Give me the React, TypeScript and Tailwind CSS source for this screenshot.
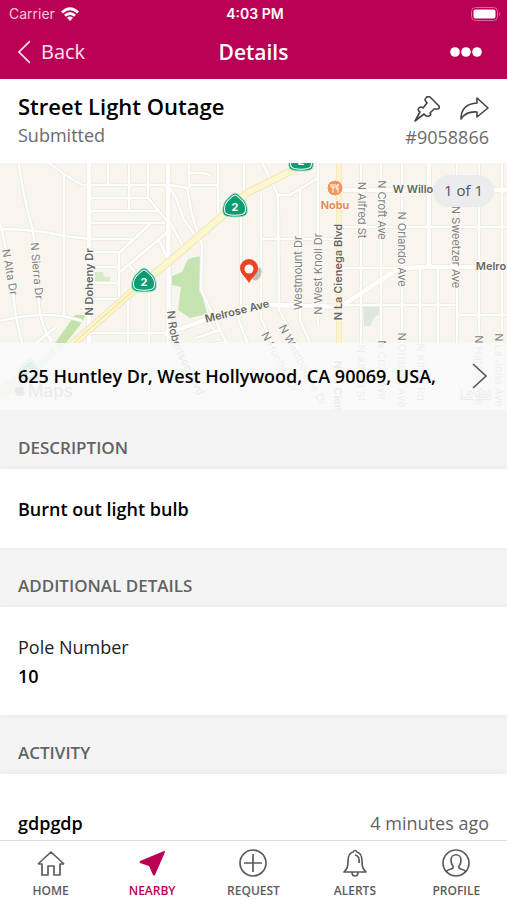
import React from 'react';
import { FaApple } from 'react-icons/fa';

type MapLabel = { text: string; x: number; y: number; angle: number; bold?: boolean };
type Tab = { label: string; icon: React.ReactNode; active?: boolean };

const minorRoads = [
  'M18 0Q25 45 33 70Q37 110 39 145Q40 165 56 190L80 240',
  'M0 62Q9 100 16 157L26 200',
  'M0 69Q35 69 65 76L89 79',
  'M45 0L64 14L82 25H170L187 28L192 55L202 85L201 130L218 165L232 195',
  'M64 14V155',
  'M0 161Q20 156 40 155Q62 154 82 161',
  'M35 184L56 167M46 174L52 180',
  'M89 38H148M89 51H158M89 63H165M89 79H132M89 107H119M89 123H119M89 139H119M89 173H170',
  'M89 92H119M119 93L150 64M120 112L170 70M119 93V148M148 38L168 62',
  'M108 0V25M129 0V51M148 0V38M128 140V250M149 124V250M128 104L136 113M159 80L167 98',
  'M170 28L176 38L184 60L200 82M170 62L184 88',
  'M189 0V28M189 13H200Q208 13 210 16M189 25H218M218 0V65M244 0V35M218 62L207 66',
  'M261 0L278 35H290L318 18M261 33V158L275 190L300 250M278 35L279 150L300 190',
  'M300 28V160L313 190M318 0V165M241 52V146M261 79H340',
  'M238 148V158L250 190M207 160L214 170M196 178L220 170M196 186L228 182',
  'M361 0V250M381 0V250M402 0V250M428 0V107M457 0V145M479 0V250M502 0V250',
  'M340 67H507M340 145H455M457 145V250M457 155H507M337 108H400M420 108V250M438 108V250M430 0V107',
];

const majorRoads = [
  'M89 0V190',
  'M168 0L169 250',
  'M165 174L205 160Q245 144 275 145L340 147L398 109L420 107H507',
  'M340 30H507',
];

const mapLabels: MapLabel[] = [
  { text: 'N Alta Dr', x: 10, y: 112, angle: 80 },
  { text: 'N Sierra Dr', x: 37, y: 111, angle: 85 },
  { text: 'N Doheny Dr', x: 89, y: 122, angle: -90, bold: true },
  { text: 'Westmount Dr', x: 298, y: 113, angle: -90 },
  { text: 'N West Knoll Dr', x: 318, y: 114, angle: -90 },
  { text: 'N La Cienega Blvd', x: 338, y: 112, angle: -90, bold: true },
  { text: 'N Alfred St', x: 362, y: 50, angle: 90 },
  { text: 'N Croft Ave', x: 382, y: 50, angle: 90 },
  { text: 'N Orlando Ave', x: 402, y: 89, angle: 90 },
  { text: 'N Sweetzer Ave', x: 456, y: 87, angle: 90 },
  { text: 'W Willo', x: 413, y: 29, angle: 0, bold: true },
  { text: 'Melro', x: 491, y: 106, angle: 0, bold: true },
  { text: 'Melrose Ave', x: 237, y: 151, angle: -14, bold: true },
  { text: 'N Huntley Dr', x: 280, y: 202, angle: 62 },
  { text: 'N Westbourne Dr', x: 303, y: 205, angle: 62 },
  { text: 'N Alfred St', x: 361, y: 213, angle: 90 },
  { text: 'N Croft Ave', x: 382, y: 210, angle: 90 },
  { text: 'N Orlando Ave', x: 402, y: 210, angle: 90 },
  { text: 'N Kings Rd', x: 421, y: 212, angle: 90 },
  { text: 'N Harper Ave', x: 479, y: 210, angle: 90 },
  { text: 'N La Jolla Ave', x: 499, y: 210, angle: 90 },
  { text: 'N La Cienega', x: 338, y: 236, angle: 90, bold: true },
];

const shields = [
  [144, 121],
  [235, 46],
  [301, 0],
  [30, 212],
];

const shieldPath = 'M0-13C3-13 5-9 8-7C12-3 13 3 12 7C11 11 5 11 0 11S-11 11-12 7C-13 3-12-3-8-7C-5-9-3-13 0-13Z';

const StreetMap = () => (
  <svg
    className="block h-[247px] w-full"
    viewBox="0 3 507 247"
    preserveAspectRatio="xMidYMid slice"
    role="img"
    aria-label="Map of West Hollywood"
  >
    <rect width="507" height="250" fill="#f8f5ee" />
    <path d="M55 183L75 155H86L80 165L66 183Z" fill="#c3e1a9" />
    <path d="M40 200L55 183H68L20 230L0 240V225Z" fill="#c3e1a9" />
    <path d="M95 112H103L104 117H110V123H95Z" fill="#d8ebc8" />
    <path d="M188 99L201 96V130L207 154L190 158L178 150L181 127L172 125V116L182 112Z" fill="#c6e4b1" />
    <path d="M363 146H380V155L375 156L370 166H364Z" fill="#dfe6dd" />

    <g fill="none" strokeLinejoin="round">
      <g stroke="#ebe7e0" strokeWidth="4">
        {minorRoads.map((d) => (
          <path key={d} d={d} />
        ))}
      </g>
      <g stroke="#ebe7e0" strokeWidth="6">
        {majorRoads.map((d) => (
          <path key={d} d={d} />
        ))}
      </g>
      <g stroke="#fffefc" strokeWidth="2.5">
        {minorRoads.map((d) => (
          <path key={d} d={d} />
        ))}
      </g>
      <g stroke="#fffefc" strokeWidth="4.5">
        {majorRoads.map((d) => (
          <path key={d} d={d} />
        ))}
      </g>
      <path d="M68 188L133 131L170 101L220 58L247 33L287 13L312 0" stroke="#efe5c0" strokeWidth="8" />
      <path d="M68 188L133 131L170 101L220 58L247 33L287 13L312 0" stroke="#fdf5cb" strokeWidth="6" />
      <path d="M70 187L88 170L133 131" stroke="#eed9a0" strokeWidth="1" />
      <path d="M339 0V250" stroke="#f6e9c0" strokeWidth="6" />
      <path d="M339 0V250" stroke="#fdf4cf" strokeWidth="4" />
    </g>

    <g fontFamily="Inter, sans-serif" fontSize="11" textAnchor="middle" stroke="#fbf9f4" strokeWidth="2" paintOrder="stroke">
      {mapLabels.map(({ text, x, y, angle, bold }) => (
        <text
          key={`${text}-${y}`}
          transform={`translate(${x} ${y}) rotate(${angle})`}
          dy="4"
          fill={bold ? '#666' : '#828282'}
          fontWeight={bold ? 600 : 400}
        >
          {text}
        </text>
      ))}
      <path id="robertson" d="M167 151Q169 178 178 196L203 246" fill="none" stroke="none" />
      <text fill="#666" fontWeight="500" textAnchor="start">
        <textPath href="#robertson">N Robertson Blvd</textPath>
      </text>
    </g>

    {shields.map(([x, y]) => (
      <g key={`${x}-${y}`} transform={`translate(${x} ${y})`}>
        <path d={shieldPath} fill="#0d9b72" stroke="#bfe3d3" strokeWidth="1" />
        <path d={shieldPath} fill="none" stroke="#fff" strokeWidth="1.2" transform="scale(0.84)" />
        <text y="5" fill="#fff" fontFamily="Inter, sans-serif" fontSize="11" fontWeight="700" textAnchor="middle">
          2
        </text>
      </g>
    ))}

    <circle cx="335" cy="28" r="8" fill="#f4935a" stroke="#fff" strokeWidth="1" />
    <path d="M331 24V27Q333 29 335 27V24M333 24V33M338 33V24Q336 25 336 29H338" fill="none" stroke="#fff" strokeWidth="1" />
    <text
      x="335"
      y="49"
      fill="#ee8148"
      stroke="#fbf9f4"
      strokeWidth="2"
      paintOrder="stroke"
      fontFamily="Inter, sans-serif"
      fontSize="11"
      fontWeight="600"
      textAnchor="middle"
    >
      Nobu
    </text>

    <ellipse cx="257" cy="114" rx="4" ry="7" fill="#8b8984" opacity="0.5" transform="rotate(25 257 114)" />
    <path d="M249 123C246 117 240 114 240 108A9 9 0 0 1 258 108C258 114 252 117 249 123Z" fill="#ea4422" />
    <circle cx="249" cy="109" r="4.5" fill="#fff" />

    <FaApple x="13" y="223" width="14" height="14" size={14} color="#555" />
    <text x="28" y="237" fill="#666" fontFamily="Inter, sans-serif" fontSize="17" fontWeight="500">
      Maps
    </text>
    <text x="460" y="238" fill="#777" fontFamily="Inter, sans-serif" fontSize="12" textDecoration="underline">
      Legal
    </text>
  </svg>
);

const tabs: Tab[] = [
  {
    label: 'HOME',
    icon: <path d="M1 15L14 3L27 15M1 15H5V26H11V17H17V26H23V15H27" />,
  },
  {
    label: 'NEARBY',
    active: true,
    icon: <path d="M26 2L2 12Q1 13 2 14L11 17L15 26Q16 27 17 26L27 3Q27 2 26 2Z" fill="currentColor" stroke="none" />,
  },
  {
    label: 'REQUEST',
    icon: (
      <>
        <circle cx="14" cy="14" r="13" />
        <path d="M14 5V23M5 14H23" />
      </>
    ),
  },
  {
    label: 'ALERTS',
    icon: (
      <>
        <path d="M12 3Q14 0 16 3C20 4 21 8 21 12C21 18 22 20 25 23H3C6 20 7 18 7 12C7 8 8 4 12 3Z" />
        <path d="M14 6Q19 7 18 14M11 23Q11 27 14 27T17 23" />
      </>
    ),
  },
  {
    label: 'PROFILE',
    icon: (
      <>
        <circle cx="14" cy="14" r="13" />
        <path d="M4 23Q5 21 9 20Q12 19 11 17Q9 15 9 11C9 4 19 4 19 11Q19 15 17 17Q16 19 19 20Q23 21 24 23" />
      </>
    ),
  },
];

const SectionTitle = ({ children }: { children: React.ReactNode }) => (
  <h2 className="h-[59px] px-[18px] pt-[26px] text-[17px] leading-6 font-semibold text-[#636363]">{children}</h2>
);

const Card = ({ children }: { children: React.ReactNode }) => (
  <div className="bg-white px-[18px] shadow-[0_0_6px_rgba(0,0,0,0.07)]">{children}</div>
);

export default function App() {
  return (
    <div className="flex h-screen flex-col overflow-hidden bg-[#f4f4f4] font-['Open_Sans',sans-serif] text-black">
      <header className="shrink-0 bg-[#ba0055] text-white">
        <div className="grid h-[27px] grid-cols-3 items-center pr-[6px] pl-[9px] font-['Inter',sans-serif] text-[14px] leading-5">
          <div className="flex items-center gap-[6px] text-[#f6c9dd]">
            Carrier
            <svg className="h-[14px] w-[18px]" viewBox="0 0 18 14" fill="#fff" aria-hidden="true">
              <path d="M0 4.5Q9-4 18 4.5L16 6.6Q9 0 2 6.6Z" />
              <path d="M3 7.7Q9 2.4 15 7.7L13 9.8Q9 6.2 5 9.8Z" />
              <path d="M6 10.8Q9 8.4 12 10.8L9 14Z" />
            </svg>
          </div>
          <span className="text-center font-semibold">4:03 PM</span>
          <svg className="h-[14px] w-[30px] justify-self-end" viewBox="0 0 30 14" aria-hidden="true">
            <rect x="0.5" y="0.5" width="26" height="13" rx="4" fill="none" stroke="#d4699b" />
            <rect x="2.5" y="2.5" width="22" height="9" rx="2" fill="#fff" />
            <path d="M28 5Q30 7 28 9Z" fill="#d4699b" />
          </svg>
        </div>
        <div className="grid h-[52px] grid-cols-3 items-center px-[18px] pb-[2px]">
          <button className="flex items-center gap-[11px] text-[20px] leading-6 text-[#fde3ee]">
            <svg className="h-6 w-3" viewBox="0 0 12 24" fill="none" stroke="currentColor" strokeWidth="1.6" aria-hidden="true">
              <path d="M12 1L1 12L12 23" />
            </svg>
            Back
          </button>
          <h1 className="text-center text-[21px] leading-6 font-semibold">Details</h1>
          <button className="justify-self-end pr-[7px]" aria-label="More options">
            <svg className="h-[10px] w-8" viewBox="0 0 32 10" fill="#fff" aria-hidden="true">
              <circle cx="5" cy="5" r="4.8" />
              <circle cx="16" cy="5" r="4.8" />
              <circle cx="27" cy="5" r="4.8" />
            </svg>
          </button>
        </div>
      </header>

      <main className="min-h-0 flex-1 overflow-hidden">
        <div className="flex h-[84px] justify-between bg-white px-[18px] pt-[13px]">
          <div>
            <h2 className="text-[22px] leading-7 font-semibold">Street Light Outage</h2>
            <p className="text-[18px] leading-[30px] text-[#6b6b6b]">Submitted</p>
          </div>
          <div className="flex flex-col items-end text-[#444]">
            <div className="flex h-[30px] items-end gap-5">
              <button aria-label="Pin request">
                <svg className="h-[26px] w-[26px]" viewBox="0 0 26 26" fill="none" stroke="currentColor" strokeWidth="1.6" strokeLinejoin="round" aria-hidden="true">
                  <path d="M12 2Q13 0 16 1L25 10Q26 12 24 13L20 13L16 17Q18 19 15 20Q12 21 10 18L1 25L6 16Q3 14 5 12Q7 10 9 12L13 7L11 4Q11 3 12 2Z" />
                </svg>
              </button>
              <button aria-label="Share request">
                <svg className="h-[26px] w-[29px]" viewBox="0 0 29 26" fill="none" stroke="currentColor" strokeWidth="1.6" strokeLinejoin="round" aria-hidden="true">
                  <path d="M17 2L28 12L17 21V16Q6 15 1 23Q1 8 17 7Z" />
                </svg>
              </button>
            </div>
            <span className="text-[18px] leading-[30px] text-[#6b6b6b]">#9058866</span>
          </div>
        </div>

        <div className="relative">
          <StreetMap />
          <span className="absolute top-3 right-[13px] rounded-2xl bg-[#ececee] px-[11px] pt-[3px] pb-[5px] text-[15px] leading-6 text-[#555]">
            1 of 1
          </span>
          <button className="absolute inset-x-0 bottom-0 flex h-[67px] items-center justify-between bg-[#fafafa]/90 pr-5 pb-[2px] pl-[18px] text-left text-[18px] leading-6 font-semibold">
            625 Huntley Dr, West Hollywood, CA 90069, USA,
            <svg className="h-[26px] w-[15px]" viewBox="0 0 15 26" fill="none" stroke="#555" strokeWidth="1.6" aria-hidden="true">
              <path d="M1 1L14 13L1 25" />
            </svg>
          </button>
        </div>

        <section>
          <SectionTitle>DESCRIPTION</SectionTitle>
          <Card>
            <p className="pt-7 pb-[26px] text-[18px] leading-[25px] font-semibold">Burnt out light bulb</p>
          </Card>
        </section>

        <section>
          <SectionTitle>ADDITIONAL DETAILS</SectionTitle>
          <Card>
            <dl className="pt-[26px] pb-6 text-[18px] leading-[29px]">
              <dt className="text-[#222]">Pole Number</dt>
              <dd className="font-semibold">10</dd>
            </dl>
          </Card>
        </section>

        <section>
          <SectionTitle>ACTIVITY</SectionTitle>
          <Card>
            <div className="flex justify-between pt-9 pb-9 text-[18px] leading-[26px]">
              <span className="font-semibold">gdpgdp</span>
              <span className="text-[#636363]">4 minutes ago</span>
            </div>
          </Card>
        </section>
      </main>

      <nav className="relative grid h-[60px] shrink-0 grid-cols-5 border-t border-[#dedede] bg-white">
        {tabs.map(({ label, icon, active }) => (
          <button
            key={label}
            className={`flex flex-col items-center gap-[5px] pt-2 text-[12px] leading-[18px] font-semibold ${
              active ? 'text-[#ba0055]' : 'text-[#5c5c5c]'
            }`}
          >
            <svg className="h-7 w-7" viewBox="0 0 28 28" fill="none" stroke="currentColor" strokeWidth="1.7" strokeLinejoin="round" aria-hidden="true">
              {icon}
            </svg>
            {label}
          </button>
        ))}
      </nav>
    </div>
  );
}
